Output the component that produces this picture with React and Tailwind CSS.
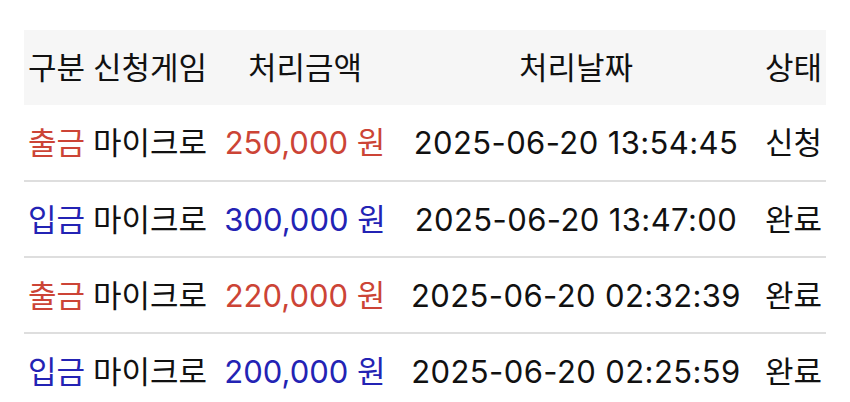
import React from "react";

const rows = [
  { type: "출금", game: "마이크로", amount: "250,000 원", date: "2025-06-20 13:54:45", status: "신청" },
  { type: "입금", game: "마이크로", amount: "300,000 원", date: "2025-06-20 13:47:00", status: "완료" },
  { type: "출금", game: "마이크로", amount: "220,000 원", date: "2025-06-20 02:32:39", status: "완료" },
  { type: "입금", game: "마이크로", amount: "200,000 원", date: "2025-06-20 02:25:59", status: "완료" },
];

export default function App() {
  return (
    <div
      className="w-[850px] h-[402px] bg-white overflow-hidden pt-[30px] pl-[24px]"
      style={{ fontFamily: 'Inter, "Noto Sans CJK KR", sans-serif' }}
    >
      <table className="w-[802px] table-fixed border-collapse text-[31px] text-[#111] leading-none">
        <colgroup>
          <col className="w-[66px]" />
          <col className="w-[126px]" />
          <col className="w-[178px]" />
          <col className="w-[364px]" />
          <col className="w-[68px]" />
        </colgroup>
        <thead>
          <tr className="bg-[#f6f6f6] h-[75px]">
            <th className="font-normal text-left pl-[4px] whitespace-nowrap">구분</th>
            <th className="font-normal text-left pl-[3px] whitespace-nowrap">신청게임</th>
            <th className="font-normal text-center whitespace-nowrap">처리금액</th>
            <th className="font-normal text-center whitespace-nowrap">처리날짜</th>
            <th className="font-normal text-right pr-[4px] whitespace-nowrap">상태</th>
          </tr>
        </thead>
        <tbody>
          {rows.map((r, i) => {
            const color = r.type === "출금" ? "text-[#cc4436]" : "text-[#2323b4]";
            return (
              <tr
                key={i}
                className={`h-[76px] ${i < rows.length - 1 ? "border-b-2 border-[#dedede]" : ""}`}
              >
                <td className={`pl-[4px] whitespace-nowrap ${color}`}>{r.type}</td>
                <td className="pl-[3px] whitespace-nowrap">{r.game}</td>
                <td className={`text-center whitespace-nowrap ${color}`}>{r.amount}</td>
                <td className="text-center whitespace-nowrap tracking-[0.4px]">{r.date}</td>
                <td className="text-right pr-[4px] whitespace-nowrap">{r.status}</td>
              </tr>
            );
          })}
        </tbody>
      </table>
    </div>
  );
}
